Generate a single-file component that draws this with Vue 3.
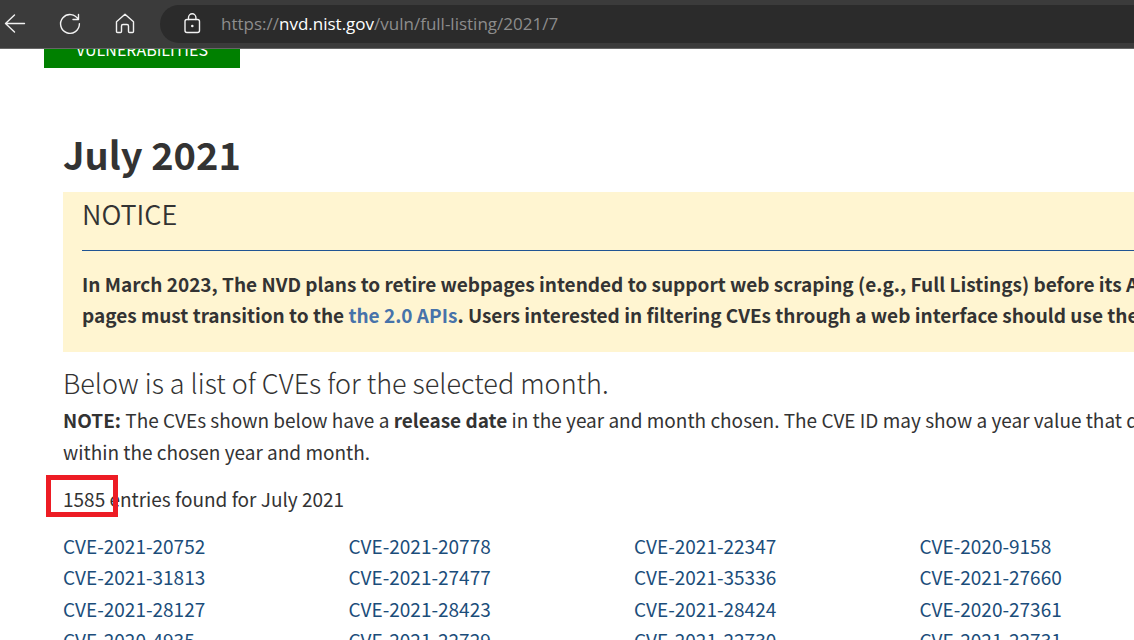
<script setup>
const rows = [
  ['CVE-2021-20752', 'CVE-2021-20778', 'CVE-2021-22347', 'CVE-2020-9158'],
  ['CVE-2021-31813', 'CVE-2021-27477', 'CVE-2021-35336', 'CVE-2021-27660'],
  ['CVE-2021-28127', 'CVE-2021-28423', 'CVE-2021-28424', 'CVE-2020-27361'],
  ['CVE-2020-4935', 'CVE-2021-22729', 'CVE-2021-22730', 'CVE-2021-22731'],
]
</script>

<template>
  <div class="window">
    <header class="toolbar">
      <button class="tool" type="button" aria-label="Back">
        <svg width="24" height="24" viewBox="0 0 24 24"><path d="M21.500 11.500H2.500M11.500 3L2.500 11.500l9 8.500" /></svg>
      </button>
      <button class="tool" type="button" aria-label="Refresh">
        <svg width="24" height="24" viewBox="0 0 24 24"><path d="M20.300 7.500A9.400 9.400 0 1 0 21.400 11.800M20.500 2.500V7.500H15" /></svg>
      </button>
      <button class="tool" type="button" aria-label="Home">
        <svg width="24" height="24" viewBox="0 0 24 24"><path d="M3.500 9.800L12 2.300l8.500 7.500V19.500q0 1-1 1h-3q-1 0-1-1v-5.500q0-1.500-1.500-1.500h-4q-1.500 0-1.500 1.500v5.500q0 1-1 1h-3q-1 0-1-1z" /></svg>
      </button>
      <div class="address">
        <button class="lock" type="button" aria-label="Site information">
          <svg width="24" height="24" viewBox="0 0 24 24"><rect x="5" y="7.500" width="14.500" height="13" rx="2" /><path d="M8.500 7.500V5.500a3.700 3.700 0 0 1 7.400 0v2" /><circle class="dot" cx="12.300" cy="14" r="1.300" /></svg>
        </button>
        <div class="url" role="textbox" contenteditable="true" spellcheck="false" aria-label="Address">https://<span class="host">nvd.nist.gov</span>/vuln/full-listing/2021/7</div>
      </div>
    </header>

    <div class="page">
      <nav class="tabs"><a class="tab" href="#">VULNERABILITIES</a></nav>
      <main class="content">
        <h1>July 2021</h1>
        <section class="notice">
          <h2>NOTICE</h2>
          <p>
            In March 2023, The NVD plans to retire webpages intended to support web scraping (e.g., Full Listings) before its A<br />
            pages must transition to the <a href="#">the 2.0 APIs</a>. Users interested in filtering CVEs through a web interface should use the
          </p>
        </section>
        <h3>Below is a list of CVEs for the selected month.</h3>
        <p class="note">
          <strong>NOTE:</strong> The CVEs shown below have a <strong>release date</strong> in the year and month chosen. The CVE ID may show a year value that d<br />
          within the chosen year and month.
        </p>
        <p class="count">1585 entries found for July 2021<span class="marker"></span></p>
        <div class="listing">
          <template v-for="row in rows" :key="row[0]">
            <a v-for="id in row" :key="id" href="#">{{ id }}</a>
          </template>
        </div>
      </main>
    </div>
  </div>
</template>

<style>
body {
  background: #fff;
}
</style>

<style scoped>
.window {
  height: 100vh;
  overflow: hidden;
  display: flex;
  flex-direction: column;
  font-family: "Noto Sans CJK SC", "Open Sans", sans-serif;
  font-size: 19px;
  font-weight: 400;
  color: #333;
}
.toolbar {
  flex: none;
  display: flex;
  align-items: center;
  height: 48px;
  background: #3b3b3b;
  border-bottom: 1px solid #666;
}
.tool,
.lock {
  flex: none;
  display: flex;
  padding: 0;
  border: 0;
  background: none;
}
.tool {
  width: 24px;
  margin-left: 3px;
}
.tool + .tool {
  margin-left: 31px;
}
svg {
  fill: none;
  stroke: #f2f2f2;
  stroke-width: 1.4;
  stroke-linecap: round;
  stroke-linejoin: round;
}
.dot {
  fill: #f2f2f2;
  stroke: none;
}
.address {
  flex: 1;
  display: flex;
  align-items: center;
  gap: 17px;
  height: 38px;
  margin-left: 23px;
  padding-left: 20px;
  border-radius: 19px 0 0 19px;
  background: #2b2b2b;
}
.url {
  flex: 1;
  font-family: "Open Sans", sans-serif;
  font-size: 17px;
  line-height: 24px;
  color: #8d8d8d;
  white-space: nowrap;
}
.host {
  color: #fff;
}
.page {
  flex: 1;
  min-height: 0;
  overflow: hidden;
}
.tabs {
  display: flex;
  align-items: flex-end;
  height: 19px;
  padding-left: 44px;
  overflow: hidden;
}
.tab {
  width: 196px;
  padding-bottom: 7px;
  background: #008000;
  color: #fff;
  font-size: 16px;
  line-height: 24px;
  text-align: center;
  text-decoration: none;
}
.content {
  margin: 61px -71px 0 63px;
  white-space: nowrap;
}
h1,
h2,
h3,
p {
  margin: 0;
}
h1 {
  font-size: 38px;
  line-height: 50px;
  font-weight: 700;
}
.notice {
  margin-top: 13px;
  padding: 0 19px 22px;
  background: #fff5d1;
}
h2 {
  height: 58px;
  border-bottom: 1px solid #205493;
  font-size: 27px;
  line-height: 44px;
  font-weight: 350;
}
.notice p {
  padding-top: 17px;
  font-weight: 700;
  line-height: 31px;
}
.notice a {
  color: #4773aa;
  text-decoration: none;
}
h3 {
  margin-top: 11px;
  font-size: 27px;
  line-height: 40px;
  font-weight: 300;
}
.note,
.count,
.listing {
  line-height: 1.66;
}
.note {
  margin-top: 1px;
}
.count {
  position: relative;
  margin: 16px 0 15px;
}
.marker {
  position: absolute;
  left: -17px;
  top: -8px;
  width: 72px;
  height: 42px;
  box-sizing: border-box;
  border: 5px solid #ed1c24;
}
.listing {
  display: grid;
  grid-template-columns: repeat(4, 1fr);
}
.listing a {
  color: #1b4d7a;
  text-decoration: none;
}
</style>
